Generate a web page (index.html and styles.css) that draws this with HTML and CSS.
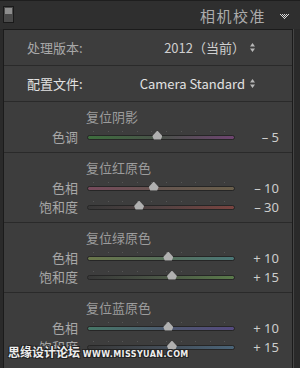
FILE: index.html
```html
<!DOCTYPE html>
<html lang="zh">
<head>
    <meta charset="utf-8">
    <title>相机校准</title>
    <link rel="stylesheet" href="styles.css">
</head>
<body>
<div class="frame">
    <div class="header">
        <span class="switch"><span class="switch-on"></span></span>
        <span class="title">相机校准</span>
        <svg class="collapse" width="9" height="5" viewBox="0 0 9 5">
            <rect x="0" y="0" width="1" height="1"/><rect x="2" y="0" width="1" height="1"/><rect x="4" y="0" width="1" height="1"/><rect x="6" y="0" width="1" height="1"/><rect x="8" y="0" width="1" height="1"/>
            <rect x="1" y="1" width="1" height="1"/><rect x="3" y="1" width="1" height="1"/><rect x="5" y="1" width="1" height="1"/><rect x="7" y="1" width="1" height="1"/>
            <rect x="2" y="2" width="1" height="1"/><rect x="4" y="2" width="1" height="1"/><rect x="6" y="2" width="1" height="1"/>
            <rect x="3" y="3" width="1" height="1"/><rect x="5" y="3" width="1" height="1"/>
            <rect x="4" y="4" width="1" height="1"/>
        </svg>
    </div>

    <div class="panel">
        <div class="option">
            <span class="option-label">处理版本:</span>
            <span class="option-value">2012（当前）
                <svg class="spin" width="5" height="9" viewBox="0 0 5 9"><path d="M2.5 0L5 3.5H0z M2.5 9L5 5.5H0z"/></svg>
            </span>
        </div>
        <div class="option">
            <span class="option-label bright">配置文件:</span>
            <span class="option-value bright">Camera Standard
                <svg class="spin" width="5" height="9" viewBox="0 0 5 9"><path d="M2.5 0L5 3.5H0z M2.5 9L5 5.5H0z"/></svg>
            </span>
        </div>

        <div class="group">
            <div class="group-title">复位阴影</div>
            <div class="slider">
                <span class="label">色调</span>
                <span class="track tint"><span class="thumb" style="left: 47.5%"></span></span>
                <span class="value">– 5</span>
            </div>
        </div>

        <div class="group">
            <div class="group-title">复位红原色</div>
            <div class="slider">
                <span class="label">色相</span>
                <span class="track red-hue"><span class="thumb" style="left: 45%"></span></span>
                <span class="value">– 10</span>
            </div>
            <div class="slider">
                <span class="label">饱和度</span>
                <span class="track red-sat"><span class="thumb" style="left: 35%"></span></span>
                <span class="value">– 30</span>
            </div>
        </div>

        <div class="group">
            <div class="group-title">复位绿原色</div>
            <div class="slider">
                <span class="label">色相</span>
                <span class="track green-hue"><span class="thumb" style="left: 55%"></span></span>
                <span class="value">+ 10</span>
            </div>
            <div class="slider">
                <span class="label">饱和度</span>
                <span class="track green-sat"><span class="thumb" style="left: 57.5%"></span></span>
                <span class="value">+ 15</span>
            </div>
        </div>

        <div class="group last">
            <div class="group-title">复位蓝原色</div>
            <div class="slider">
                <span class="label">色相</span>
                <span class="track blue-hue"><span class="thumb" style="left: 55%"></span></span>
                <span class="value">+ 10</span>
            </div>
            <div class="slider">
                <span class="label">饱和度</span>
                <span class="track blue-sat"><span class="thumb" style="left: 57.5%"></span></span>
                <span class="value">+ 15</span>
            </div>
        </div>
    </div>

    <div class="watermark">思缘设计论坛 <small>WWW.MISSYUAN.COM</small></div>
</div>
</body>
</html>
```

FILE: styles.css
```css
body {
    margin: 0;
    background-color: #2b2b2b;
    font-family: "Noto Sans", "Noto Sans CJK SC", sans-serif;
    font-size: 13px;
    color: #a9a9a9;
}
.frame {
    position: relative;
    width: 300px;
    height: 368px;
    overflow: hidden;
    background-color: #2a2a2a;
    border-top: 1px solid #1e1e1e;
    box-sizing: border-box;
}
.header {
    height: 28px;
    display: flex;
    align-items: center;
    padding: 0 11px 0 3px;
    background-color: #2f2f2f;
}
.switch {
    width: 7px;
    height: 13px;
    border: 1px solid #1a1a1a;
    background-color: #4a4a4a;
    display: flex;
    flex-direction: column;
    padding: 1px;
    box-sizing: content-box;
    margin-top: -1px;
}
.switch-on {
    height: 6px;
    background-color: #8e8e8e;
}
.title {
    margin-left: auto;
    font-size: 15px;
    letter-spacing: 1.5px;
    color: #ababab;
    font-family: "Noto Sans CJK SC", sans-serif;
}
.collapse {
    margin-left: 14px;
    margin-top: 2px;
    fill: #d8d8d8;
}
.panel {
    width: 290px;
    margin-left: 3px;
    background-color: #3d3d3d;
    border: 1px solid #1b1b1b;
    border-bottom: none;
    box-sizing: border-box;
    height: 339px;
    box-shadow: 1px 0 0 #454545;
}
.option {
    height: 35px;
    display: flex;
    align-items: center;
    padding: 0 37px 0 23px;
    border-bottom: 1px solid #2a2a2a;
}
.option-label {
    color: #a8a8a8;
    font-family: "Noto Sans CJK SC", sans-serif;
}
.option-value {
    margin-left: auto;
    display: flex;
    align-items: center;
    color: #cfcfcf;
    font-family: "Noto Sans CJK SC", sans-serif;
}
.bright {
    color: #e2e2e2;
}
.spin {
    margin-left: 5px;
    fill: #b8b8b8;
}
.group {
    padding: 5px 0 6px;
    border-bottom: 1px solid #2a2a2a;
}
.group.last {
    border-bottom: none;
}
.group-title {
    height: 20px;
    line-height: 20px;
    padding-left: 82px;
    color: #9c9c9c;
    font-family: "Noto Sans CJK SC", sans-serif;
}
.slider {
    height: 19px;
    display: flex;
    align-items: center;
}
.label {
    width: 74px;
    text-align: right;
    color: #a8a8a8;
    font-family: "Noto Sans CJK SC", sans-serif;
}
.track {
    position: relative;
    width: 146px;
    height: 3px;
    margin-left: 9px;
    border: 1px solid #262626;
    border-radius: 3px;
    box-sizing: content-box;
    margin-top: 1px;
}
.track::before {
    content: "";
    position: absolute;
    left: 5px;
    right: 5px;
    top: -5px;
    height: 1px;
    background: repeating-linear-gradient(90deg, #565656 0 1px, transparent 1px 14.6px);
}
.thumb {
    position: absolute;
    top: -5px;
    width: 10px;
    height: 9px;
    margin-left: -5px;
    background-color: #b0b0b0;
    clip-path: polygon(50% 0, 100% 60%, 85% 100%, 15% 100%, 0 60%);
}
.value {
    flex: 1;
    text-align: right;
    padding-right: 13px;
    color: #cdcdcd;
}
.tint { background: linear-gradient(90deg, #3d6e3d, #4a514a 50%, #6e4470); }
.red-hue { background: linear-gradient(90deg, #774a5c, #665650 50%, #6a5f4b); }
.red-sat { background: linear-gradient(90deg, #383838, #524242 50%, #7a4440); }
.green-hue { background: linear-gradient(90deg, #6a774a, #58705a 50%, #4a7777); }
.green-sat { background: linear-gradient(90deg, #383838, #4b5646 50%, #5a7a4a); }
.blue-hue { background: linear-gradient(90deg, #467767, #4e5670 60%, #554a80); }
.blue-sat { background: linear-gradient(90deg, #383838, #434c56 50%, #4a6478); }
.watermark {
    position: absolute;
    left: 8px;
    top: 343px;
    font-family: "Noto Sans CJK SC", sans-serif;
    font-size: 12px;
    line-height: 16px;
    font-weight: bold;
    color: #eeeeee;
    text-shadow: 1px 1px 0 #222, -1px -1px 0 #222, 1px -1px 0 #222, -1px 1px 0 #222;
    white-space: nowrap;
}
.watermark small {
    font-family: "DejaVu Sans", sans-serif;
    font-size: 8px;
    letter-spacing: 0.4px;
}
```
